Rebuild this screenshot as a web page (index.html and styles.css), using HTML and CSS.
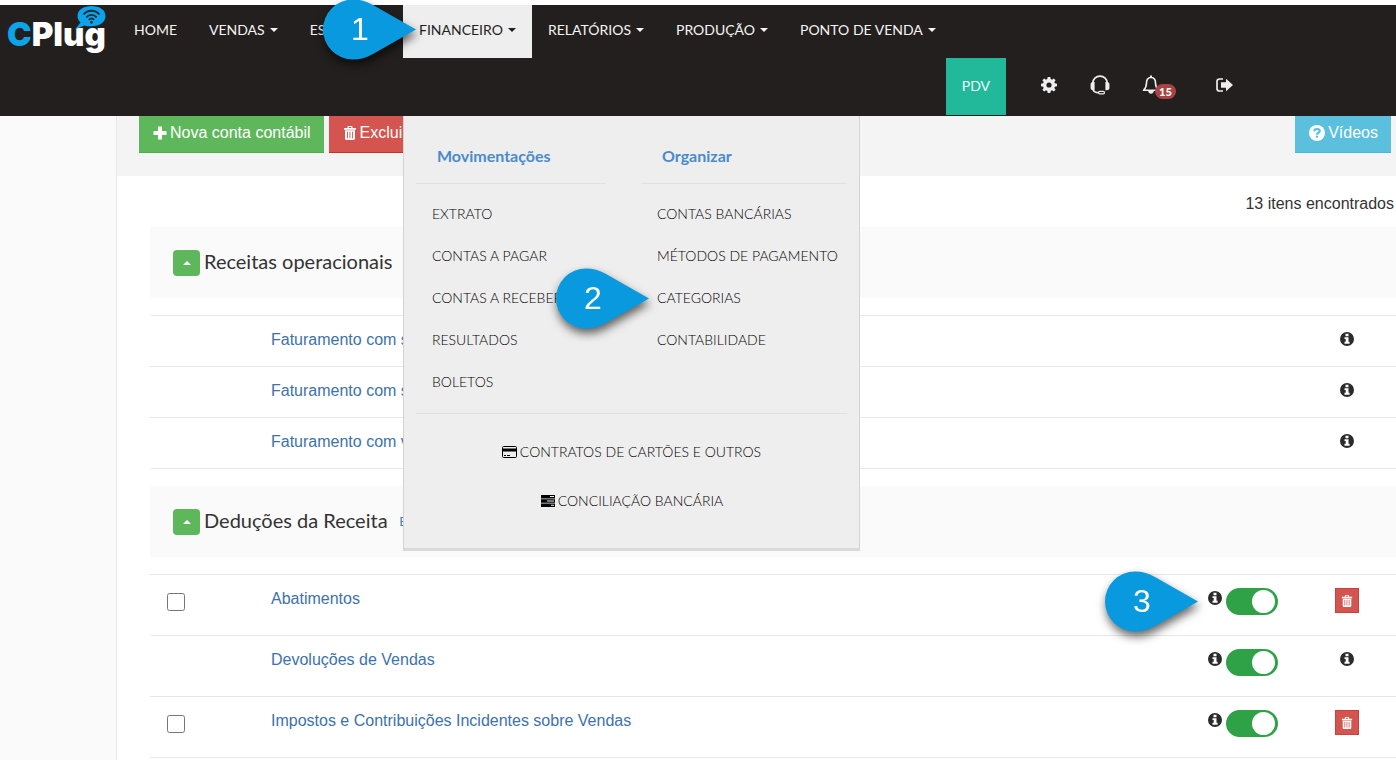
FILE: index.html
```html
<!DOCTYPE html>
<html lang="pt-BR">
<head>
<meta charset="utf-8">
<title>CPlug - Categorias</title>
<link rel="stylesheet" href="styles.css">
</head>
<body>
<svg class="defs" width="0" height="0" aria-hidden="true">
  <symbol id="i-info" viewBox="0 0 14 14"><path fill="currentColor" fill-rule="evenodd" d="M7 0a7 7 0 1 0 0 14A7 7 0 0 0 7 0zM5.500 1.800h3v2.400h-3zM4.500 5.200h4v4.600h1.100v2H4.500v-2h1.200V7H4.500z"/></symbol>
  <symbol id="i-trash" viewBox="0 0 14 14"><path fill="currentColor" fill-rule="evenodd" d="M4.500 2V1c0-.6.4-1 1-1h3c.6 0 1 .4 1 1v1H13v1.700H1V2zm1.200 0h2.600V1H5.700zM2 4.300h10V12.500c0 .9-.6 1.500-1.500 1.500h-7C2.600 14 2 13.400 2 12.500zM4 5.700v6.500h.9V5.700zm2.500 0v6.500h.9V5.700zm2.500 0v6.500h.9V5.700z"/></symbol>
  <symbol id="i-drop" viewBox="0 0 93 61"><path fill="#0899df" d="M93 30.500L50 6C43 2 37 .5 30 .5a30 30 0 0 0 0 60c7 0 13-1.500 20-5.500z"/></symbol>
</svg>

<header class="topbar">
  <div class="topbar-row">
    <a class="logo" href="#"><span class="logo-c">C</span><span>Plug</span>
      <svg class="logo-bubble" viewBox="0 0 32 25" width="32" height="25" aria-hidden="true"><path fill="#0ba3ea" d="M17.500 1C25.500 1 31.500 4.800 31.500 11S25.500 21.300 17.500 21.300c-3 0-5 0-7-.8L1 24.500l5.500-7C4.500 15.500 3.500 13.500 3.500 11 3.500 4.800 9.500 1 17.500 1z"/><g fill="none" stroke="#1c2a33" stroke-width="1.800"><path d="M9.500 9.500c4.500-5 11.500-5 16 0M12.300 12.300c3-3.300 7.400-3.300 10.400 0M14.800 14.800c1.700-1.700 3.700-1.700 5.400 0"/></g><circle cx="17.500" cy="17.300" r="1.400" fill="#1c2a33"/></svg>
    </a>
    <nav class="nav">
      <a class="nav-link" href="#">HOME</a>
      <a class="nav-link" href="#">VENDAS<i class="caret"></i></a>
      <a class="nav-link" href="#">ESTOQUE<i class="caret"></i></a>
      <div class="nav-item">
        <a class="nav-link active" href="#">FINANCEIRO<i class="caret"></i></a>
        <div class="callout callout-nav"><svg viewBox="0 0 93 61"><use href="#i-drop"/></svg><b>1</b></div>
        <div class="mega">
          <div class="mega-cols">
            <section>
              <h3>Movimentações</h3>
              <a href="#">EXTRATO</a>
              <a href="#">CONTAS A PAGAR</a>
              <a href="#">CONTAS A RECEBER</a>
              <a href="#">RESULTADOS</a>
              <a href="#">BOLETOS</a>
            </section>
            <section>
              <h3>Organizar</h3>
              <a href="#">CONTAS BANCÁRIAS</a>
              <a href="#">MÉTODOS DE PAGAMENTO</a>
              <div class="mega-item"><a href="#">CATEGORIAS</a><div class="callout callout-menu"><svg viewBox="0 0 93 61"><use href="#i-drop"/></svg><b>2</b></div></div>
              <a href="#">CONTABILIDADE</a>
            </section>
          </div>
          <div class="mega-foot">
            <a href="#"><svg viewBox="0 0 16 14" width="16" height="14"><rect x=".5" y="1.500" width="14" height="11" rx="1" fill="none" stroke="currentColor"/><path fill="currentColor" d="M1 3.500h13v3H1zM2 10h2v1H2zM5 10h3v1H5z"/></svg>CONTRATOS DE CARTÕES E OUTROS</a>
            <a href="#"><svg viewBox="0 0 16 14" width="16" height="14"><path fill="currentColor" fill-rule="evenodd" d="M1 1h14v3.400H1zM10 2v1h4V2zM1 5.300h14v3.400H1zM7 6.500v1h7v-1zM1 9.600h14V13H1zM11 10.800v1h3v-1z"/></svg>CONCILIAÇÃO BANCÁRIA</a>
          </div>
        </div>
      </div>
      <a class="nav-link" href="#">RELATÓRIOS<i class="caret"></i></a>
      <a class="nav-link" href="#">PRODUÇÃO<i class="caret"></i></a>
      <a class="nav-link" href="#">PONTO DE VENDA<i class="caret"></i></a>
    </nav>
  </div>
  <div class="tools">
    <a class="pdv" href="#">PDV</a>
    <button class="tool" aria-label="Configurações"><svg viewBox="0 0 16 16" width="16" height="16"><path fill="currentColor" fill-rule="evenodd" d="M6.700 0h2.600l.4 2.100 1.300.6 1.800-1.300 1.800 1.800L13.300 5l.6 1.300 2.100.4v2.600l-2.100.4-.6 1.300 1.300 1.800-1.800 1.800-1.800-1.300-1.300.6-.4 2.100H6.700l-.4-2.100L5 13.300l-1.800 1.300-1.800-1.800L2.700 11l-.6-1.300L0 9.300V6.700l2.100-.4L2.700 5 1.400 3.200l1.800-1.800L5 2.700l1.300-.6zM8 5.400a2.600 2.600 0 1 0 0 5.200 2.600 2.600 0 0 0 0-5.200z"/></svg></button>
    <button class="tool" aria-label="Suporte"><svg viewBox="0 0 20 20" width="20" height="20"><path fill="none" stroke="currentColor" stroke-width="1.700" d="M2.800 8a7.200 6.800 0 0 1 14.400 0M3 14.500c.8 2.300 3 3.200 5.500 3.200"/><path fill="currentColor" d="M.6 9q0-2.300 4-2v8.200q-4 .3-4-2.200zM19.400 9q0-2.300-4-2v8.200q4 .3 4-2.200z"/><rect x="8.500" y="16.300" width="6" height="2.600" rx="1.300" fill="none" stroke="currentColor" stroke-width="1.200"/></svg></button>
    <button class="tool" aria-label="Notificações"><svg viewBox="0 0 18 20" width="18" height="20"><path fill="none" stroke="currentColor" stroke-width="1.600" stroke-linejoin="round" d="M9 2.500c-3.500 0-4.500 2.500-4.500 5.500 0 3.500-1 5.300-3 7.300h15c-2-2-3-3.800-3-7.300 0-3-1-5.500-4.500-5.500z"/><path fill="currentColor" d="M8 .5h2v2H8zM6.200 16h5.600c-.3 1.800-1.300 2.700-2.800 2.700S6.500 17.800 6.200 16z"/></svg><span class="badge">15</span></button>
    <button class="tool tool-exit" aria-label="Sair"><svg viewBox="0 0 17 14" width="17" height="14"><path fill="none" stroke="currentColor" stroke-width="1.700" d="M7 1H3.500Q1 1 1 3.500v7Q1 13 3.500 13H7"/><path fill="currentColor" d="M5 4.300h5V.8l7 6.200-7 6.200V9.700H5z"/></svg></button>
  </div>
</header>

<div class="page">
  <aside class="sidebar"></aside>
  <main class="main">
    <div class="toolbar">
      <button class="btn btn-green"><svg viewBox="0 0 14 14" width="14" height="14"><path fill="currentColor" d="M5 .5h4V5h4.500v4H9v4.500H5V9H.5V5H5z"/></svg>Nova conta contábil</button>
      <button class="btn btn-red"><svg width="14" height="14"><use href="#i-trash"/></svg>Excluir</button>
      <button class="btn btn-blue"><svg viewBox="0 0 16 16" width="16" height="16"><path fill="currentColor" d="M8 0a8 8 0 1 0 0 16A8 8 0 0 0 8 0z"/><path fill="none" stroke="#5bbfde" stroke-width="2.200" d="M5.300 6.300Q5.300 4 8 4t2.700 2Q10.700 7.300 9.300 8 8 8.600 8 9.700"/><path fill="#5bbfde" d="M6.900 10.700h2.200v2H6.900z"/></svg>Vídeos</button>
    </div>
    <p class="count">13 itens encontrados</p>

    <section class="group">
      <div class="group-head"><button class="collapse" aria-label="Recolher"><i class="caret up"></i></button><h2>Receitas operacionais</h2></div>
      <table class="accounts compact">
        <tr><td class="pick"></td><td><a href="#">Faturamento com s</a></td><td class="state"></td><td class="act"><svg class="info"><use href="#i-info"/></svg></td></tr>
        <tr><td class="pick"></td><td><a href="#">Faturamento com s</a></td><td class="state"></td><td class="act"><svg class="info"><use href="#i-info"/></svg></td></tr>
        <tr><td class="pick"></td><td><a href="#">Faturamento com v</a></td><td class="state"></td><td class="act"><svg class="info"><use href="#i-info"/></svg></td></tr>
      </table>
    </section>

    <section class="group">
      <div class="group-head"><button class="collapse" aria-label="Recolher"><i class="caret up"></i></button><h2>Deduções da Receita</h2><a class="edit" href="#">E</a></div>
      <table class="accounts">
        <tr><td class="pick"><input class="check" type="checkbox" aria-label="Selecionar Abatimentos"></td><td><a href="#">Abatimentos</a></td>
          <td class="state"><div class="state-box"><svg class="info"><use href="#i-info"/></svg><input class="switch" type="checkbox" checked aria-label="Ativar Abatimentos"><div class="callout callout-row"><svg viewBox="0 0 93 61"><use href="#i-drop"/></svg><b>3</b></div></div></td>
          <td class="act"><button class="del" aria-label="Excluir"><svg width="12" height="12"><use href="#i-trash"/></svg></button></td></tr>
        <tr><td class="pick"></td><td><a href="#">Devoluções de Vendas</a></td>
          <td class="state"><div class="state-box"><svg class="info"><use href="#i-info"/></svg><input class="switch" type="checkbox" checked aria-label="Ativar Devoluções de Vendas"></div></td>
          <td class="act"><svg class="info"><use href="#i-info"/></svg></td></tr>
        <tr><td class="pick"><input class="check" type="checkbox" aria-label="Selecionar Impostos e Contribuições"></td><td><a href="#">Impostos e Contribuições Incidentes sobre Vendas</a></td>
          <td class="state"><div class="state-box"><svg class="info"><use href="#i-info"/></svg><input class="switch" type="checkbox" checked aria-label="Ativar Impostos e Contribuições"></div></td>
          <td class="act"><button class="del" aria-label="Excluir"><svg width="12" height="12"><use href="#i-trash"/></svg></button></td></tr>
      </table>
    </section>
  </main>
</div>
</body>
</html>
```
FILE: styles.css
```css
* { box-sizing: border-box; }
html { height: 100%; }
body {
  margin: 0;
  min-height: 100%;
  padding-top: 5px;
  display: flex;
  flex-direction: column;
  background: #fff;
  color: #333;
  font: 16px/20px "Liberation Sans", Arial, sans-serif;
  overflow: hidden;
}
a { color: #3c72ae; text-decoration: none; }
button { font: inherit; color: inherit; border: 0; background: none; padding: 0; cursor: pointer; }
svg { display: block; flex: none; }
.defs { position: absolute; }

/* Top bar */
.topbar {
  position: relative;
  z-index: 5;
  background: #231f1e;
  font-family: Lato, sans-serif;
  font-size: 14px;
}
.topbar-row { display: flex; height: 53px; }
.logo {
  position: relative;
  display: flex;
  align-items: center;
  width: 118px;
  padding: 6px 0 0 7px;
  color: #fff;
  font-family: Inter, sans-serif;
  font-size: 33px;
  font-weight: 900;
  line-height: 47px;
}
.logo-c { color: #0ba3ea; }
.logo-bubble { position: absolute; left: 74px; top: 0; }
.nav { display: flex; }
.nav-item { position: relative; }
.nav-link {
  display: flex;
  align-items: center;
  height: 53px;
  padding: 0 16px 4px;
  color: #f4f4f4;
  white-space: nowrap;
}
.nav-link.active { background: #eee; color: #231f1e; }
.caret {
  border: 4px solid transparent;
  border-top-color: currentColor;
  border-bottom: 0;
  margin-left: 5px;
}
.caret.up { border-top: 0; border-bottom: 4px solid currentColor; margin: 0; }

.tools {
  display: flex;
  align-items: center;
  justify-content: flex-end;
  height: 58px;
  padding: 0 146px 1px 0;
  color: #eee;
}
.pdv {
  display: flex;
  align-items: center;
  align-self: stretch;
  padding: 0 16px 2px;
  background: #22b99a;
  color: #f0fffb;
}
.tool {
  position: relative;
  display: flex;
  align-items: center;
  justify-content: center;
  width: 51px;
  height: 40px;
  padding-bottom: 4px;
}
.pdv + .tool { margin-left: 17px; }
.tool-exit { margin-left: 23px; }
.badge {
  position: absolute;
  left: 30px;
  top: 17px;
  padding: 0 4px;
  border-radius: 8px;
  background: #a94442;
  color: #fff;
  font-size: 11px;
  font-weight: 900;
  line-height: 15px;
}

/* Finance menu */
.mega {
  position: absolute;
  left: 0;
  top: 111px;
  width: 457px;
  padding: 20px 12px 26px;
  background: #eee;
  border: 1px solid #d4d4d4;
  border-top: 0;
  border-bottom: 3px solid #dadada;
}
.mega a { display: flex; align-items: center; height: 42px; padding-left: 16px; color: #000; font-weight: 300; white-space: nowrap; }
.mega-cols { display: grid; grid-template-columns: 190px 1fr; column-gap: 35px; padding-bottom: 10px; border-bottom: 1px solid #e1e1e1; }
.mega h3 {
  margin: 0 0 9px;
  padding: 9px 21px 17px;
  border-bottom: 1px solid #e1e1e1;
  color: #4a8bcb;
  font-size: 16px;
  line-height: 21px;
}
.mega-item { position: relative; }
.mega-foot { display: flex; flex-direction: column; gap: 7px; padding-top: 17px; }
.mega-foot a { justify-content: center; gap: 2px; padding: 0; }

/* Step markers */
.callout { position: absolute; z-index: 6; width: 93px; height: 61px; filter: drop-shadow(1px 5px 5px rgba(0, 0, 0, .6)); }
.callout svg { width: 93px; height: 61px; }
.callout b {
  position: absolute;
  left: 0;
  top: 0;
  width: 74px;
  text-align: center;
  color: #fff;
  font: 32px/61px "Liberation Sans", Arial, sans-serif;
}
.callout-nav { left: -80px; top: -6px; }
.callout-menu { left: -85px; top: -9px; }
.callout-row { right: 100px; top: -17px; }

/* Page */
.page { display: flex; flex: 1; }
.sidebar { width: 117px; flex: none; background: #fafafa; border-right: 1px solid #e8e8e8; }
.main { flex: 1; }
.toolbar {
  display: flex;
  align-items: flex-start;
  gap: 5px;
  height: 60px;
  padding: 0 5px 0 22px;
  background: #f4f4f4;
}
.btn { display: flex; align-items: center; gap: 3px; height: 37px; padding: 0 13px 2px 14px; color: #fff; }
.btn-green { background: #5fb75c; border-bottom: 1px solid #4cae4c; }
.btn-red { background: #d4544f; border-bottom: 1px solid #c9302c; }
.btn-blue { margin-left: auto; background: #5bbfde; border-bottom: 1px solid #46b8da; }
.count { margin: 18px 2px 13px; text-align: right; }

.group { margin: 0 0 18px 33px; }
.group-head { display: flex; align-items: center; height: 71px; padding: 0 23px; background: #fafafa; }
.collapse {
  display: flex;
  align-items: center;
  justify-content: center;
  width: 27px;
  height: 26px;
  border-radius: 4px;
  background: #5fb75c;
  color: #fff;
}
.group h2 { margin: 0 0 4px 4px; font: 20px/24px Lato, sans-serif; }
.edit { margin-left: 12px; font-size: 12px; }
.accounts { width: 100%; margin-top: 17px; border-collapse: collapse; }
.accounts td { height: 61px; padding: 14px 0 0; border-top: 1px solid #e8e8e8; vertical-align: top; }
.compact { margin-bottom: -1px; }
.accounts.compact td { height: 51px; }
.accounts tr:last-child td { border-bottom: 1px solid #e8e8e8; }
.accounts .pick { width: 121px; padding: 18px 0 0 17px; }
.group + .group { margin-top: -1px; }
.state { width: 90px; }
.act { width: 98px; }
.info { width: 14px; height: 14px; color: #2b2b2b; }
.accounts .act .info { margin: 2px auto 0 42px; }
.state-box { position: relative; display: flex; gap: 4px; }
.accounts .state-box .info { margin-top: 3px; }
.check { display: block; width: 18px; height: 18px; margin: 0; }
.switch { appearance: none; width: 52px; height: 27px; margin: 0; border-radius: 14px; background: #2fa247; }
.accounts td.state, .accounts td:has(.del) { padding-top: 13px; }
.switch::before { content: ""; display: block; width: 23px; height: 23px; margin: 2px 0 0 26px; border-radius: 50%; background: #fff; }
.del {
  display: flex;
  align-items: center;
  justify-content: center;
  width: 24px;
  height: 25px;
  margin-left: 37px;
  border: 1px solid #c9403c;
  background: #d4544f;
  color: #fff;
}
```
